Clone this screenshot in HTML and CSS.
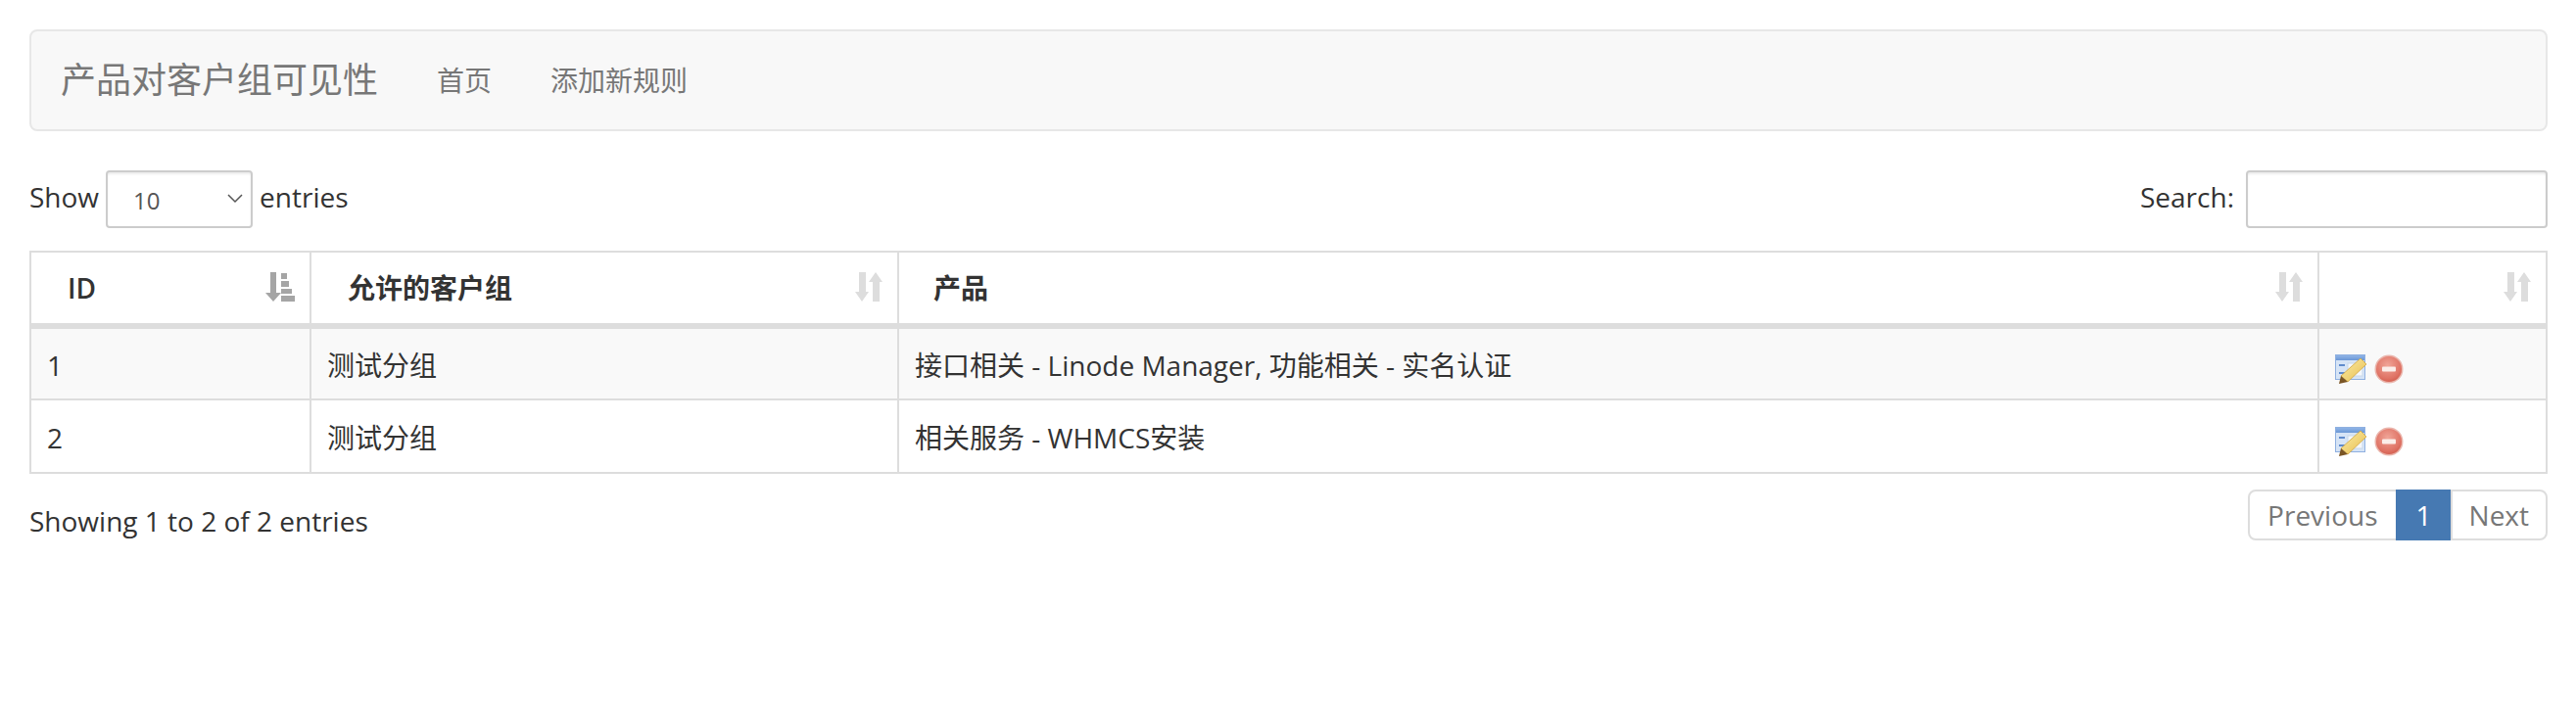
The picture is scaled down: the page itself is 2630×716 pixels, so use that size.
FILE: index.html
```html
<!DOCTYPE html>
<html lang="zh-CN">
<head>
  <meta charset="UTF-8">
  <title>产品对客户组可见性</title>
  <link rel="stylesheet" href="styles.css">
</head>
<body>
  <svg class="defs" width="0" height="0">
    <defs>
      <linearGradient id="pencil" x1="0" y1="0" x2="1" y2="1">
        <stop offset="0" stop-color="#fbeeaa"/>
        <stop offset="1" stop-color="#e8bc4c"/>
      </linearGradient>
      <linearGradient id="titlebar" x1="0" y1="0" x2="0" y2="1">
        <stop offset="0" stop-color="#8fb4e6"/>
        <stop offset="1" stop-color="#6b97d6"/>
      </linearGradient>
      <radialGradient id="redball" cx="0.45" cy="0.35" r="0.75">
        <stop offset="0" stop-color="#f0a598"/>
        <stop offset="0.7" stop-color="#df7264"/>
        <stop offset="1" stop-color="#cc5646"/>
      </radialGradient>
      <symbol id="sort-both" viewBox="0 0 28 30">
        <path d="M4 0h7v20h3l-7 10-7-10h4z"/>
        <path d="M21 0l7 10h-3v20h-7V10h-4z"/>
      </symbol>
      <symbol id="sort-asc" viewBox="0 0 30 30">
        <path d="M5 0h6v21h5l-8 9-8-9h5z"/>
        <path d="M16 1h6v6h-6zM16 9h8v6h-8zM16 17h11v5H16zM16 24h14v6H16z"/>
      </symbol>
      <symbol id="icon-edit" viewBox="0 0 32 30">
        <rect x="0.500" y="0.500" width="30" height="25" fill="#d6e4f6" stroke="#8fb0e0"/>
        <rect x="1" y="1" width="29" height="5" fill="url(#titlebar)"/>
        <rect x="4" y="10" width="6" height="2" fill="#5f8bcc"/>
        <rect x="4" y="18" width="6" height="2" fill="#5f8bcc"/>
        <rect x="13" y="9" width="15" height="13" fill="#f4f7fb" stroke="#c8d7ea"/>
        <path d="M26 4l6 6L13 28l-7-6z" fill="url(#pencil)" stroke="#d2a63f" stroke-width="0.800"/>
        <path d="M6 22l7 6-9 2z" fill="#7a5524"/>
      </symbol>
      <symbol id="icon-delete" viewBox="0 0 30 30">
        <circle cx="15" cy="15" r="14.500" fill="#eab5ac"/>
        <circle cx="15" cy="15" r="13" fill="url(#redball)"/>
        <rect x="8" y="12.500" width="14" height="5" rx="1" fill="#fbeeea"/>
      </symbol>
    </defs>
  </svg>

  <nav class="navbar">
    <span class="brand">产品对客户组可见性</span>
    <a class="nav-link">首页</a>
    <a class="nav-link">添加新规则</a>
  </nav>

  <div class="controls">
    <label class="length">
      <span class="lbl">Show</span>
      <span class="fake-select">10
        <svg class="chevron" viewBox="0 0 16 10"><path d="M1 1l7 7 7-7" fill="none" stroke="#555" stroke-width="1.500"/></svg>
      </span>
      <span class="lbl">entries</span>
    </label>
    <label class="search">
      <span class="lbl">Search:</span>
      <input type="text" class="search-box">
    </label>
  </div>

  <table class="data">
    <colgroup>
      <col class="col-id">
      <col class="col-group">
      <col class="col-product">
      <col class="col-actions">
    </colgroup>
    <thead>
      <tr>
        <th><div class="th-inner"><span class="pad-id">ID</span><svg class="sort active"><use href="#sort-asc"/></svg></div></th>
        <th><div class="th-inner"><span class="pad-group">允许的客户组</span><svg class="sort"><use href="#sort-both"/></svg></div></th>
        <th><div class="th-inner"><span class="pad-product">产品</span><svg class="sort"><use href="#sort-both"/></svg></div></th>
        <th><div class="th-inner"><span></span><svg class="sort"><use href="#sort-both"/></svg></div></th>
      </tr>
    </thead>
    <tbody>
      <tr class="odd">
        <td>1</td>
        <td>测试分组</td>
        <td>接口相关 - Linode Manager, 功能相关 - 实名认证</td>
        <td class="actions">
          <svg class="ic-edit"><use href="#icon-edit"/></svg>
          <svg class="ic-delete"><use href="#icon-delete"/></svg>
        </td>
      </tr>
      <tr>
        <td>2</td>
        <td>测试分组</td>
        <td>相关服务 - WHMCS安装</td>
        <td class="actions">
          <svg class="ic-edit"><use href="#icon-edit"/></svg>
          <svg class="ic-delete"><use href="#icon-delete"/></svg>
        </td>
      </tr>
    </tbody>
  </table>

  <div class="footer">
    <div class="info">Showing 1 to 2 of 2 entries</div>
    <ul class="pagination">
      <li>Previous</li>
      <li class="current">1</li>
      <li class="next">Next</li>
    </ul>
  </div>
</body>
</html>
```

FILE: styles.css
```css
* {
  box-sizing: border-box;
}

body {
  margin: 0;
  padding: 30px 29px 30px 30px;
  background: #fff;
  color: #333;
  font-family: "Open Sans", "Noto Sans CJK SC", sans-serif;
  font-size: 28px;
  line-height: 40px;
}

.defs {
  display: block;
  height: 0;
}

.navbar {
  display: flex;
  align-items: center;
  height: 104px;
  padding-left: 30px;
  background: #f8f8f8;
  border: 2px solid #e7e7e7;
  border-radius: 8px;
  color: #777;
}

.brand {
  font-size: 36px;
  margin-right: 60px;
}

.nav-link {
  margin-right: 60px;
}

.controls {
  display: flex;
  justify-content: space-between;
  align-items: center;
  height: 59px;
  margin-top: 40px;
}

.length,
.search {
  display: flex;
  align-items: center;
}

.lbl {
  margin-top: -6px;
}

.fake-select {
  display: flex;
  align-items: center;
  justify-content: space-between;
  width: 150px;
  height: 59px;
  margin: 0 7px;
  padding: 2px 8px 0 26px;
  border: 2px solid #ccc;
  border-radius: 4px;
  box-shadow: inset 0 2px 2px rgba(0, 0, 0, 0.075);
  font-size: 24px;
  color: #555;
}

.chevron {
  width: 16px;
  height: 10px;
  margin-top: -4px;
}

.search-box {
  width: 308px;
  height: 59px;
  margin-left: 12px;
  border: 2px solid #ccc;
  border-radius: 4px;
  box-shadow: inset 0 2px 2px rgba(0, 0, 0, 0.075);
  background: #fff;
}

.data {
  width: 100%;
  margin-top: 23px;
  border-collapse: collapse;
  table-layout: fixed;
}

.col-id {
  width: 286px;
}

.col-group {
  width: 600px;
}

.col-product {
  width: 1450px;
}

.data th,
.data td {
  border: 2px solid #ddd;
  text-align: left;
}

.data th {
  height: 76px;
  padding: 0 16px;
  border-bottom: 6px solid #ddd;
  font-weight: 600;
}

.th-inner {
  display: flex;
  justify-content: space-between;
  align-items: center;
  margin-right: -1px;
}

.pad-id {
  padding-left: 21px;
}

.pad-group {
  padding-left: 21px;
}

.pad-product {
  padding-left: 19px;
}

.sort {
  width: 28px;
  height: 30px;
  margin-top: -2px;
  fill: #ddd;
}

.sort.active {
  width: 30px;
  fill: #a5a5a5;
}

.data td {
  height: 75px;
  padding: 2px 16px 0;
}

.odd td {
  background: #f9f9f9;
}

.actions {
  line-height: 0;
}

.actions svg {
  vertical-align: top;
}

.ic-edit {
  width: 32px;
  height: 30px;
  margin-top: 9px;
}

.ic-delete {
  width: 30px;
  height: 30px;
  margin-top: 9px;
  margin-left: 1px;
}

.footer {
  display: flex;
  justify-content: space-between;
  align-items: flex-start;
  margin-top: 16px;
}

.info {
  margin-top: 12px;
}

.pagination {
  display: flex;
  margin: 0;
  padding: 0;
  list-style: none;
  color: #777;
}

.pagination li {
  height: 52px;
  padding: 4px 18px;
  border: 2px solid #ddd;
  margin-left: -2px;
}

.pagination li:first-child {
  border-radius: 8px 0 0 8px;
}

.pagination .next {
  padding: 4px 17px;
  border-radius: 0 8px 8px 0;
}

.pagination .current {
  padding: 4px 19px;
  background: #4679b2;
  border-color: #4679b2;
  color: #fff;
}
```
